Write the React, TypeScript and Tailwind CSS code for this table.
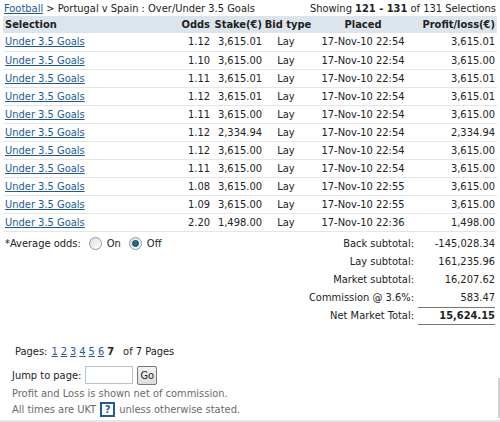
const rows = [
  ["1.12", "3,615.01", "17-Nov-10 22:54", "3,615.01"],
  ["1.10", "3,615.00", "17-Nov-10 22:54", "3,615.00"],
  ["1.11", "3,615.01", "17-Nov-10 22:54", "3,615.01"],
  ["1.12", "3,615.01", "17-Nov-10 22:54", "3,615.01"],
  ["1.11", "3,615.00", "17-Nov-10 22:54", "3,615.00"],
  ["1.12", "2,334.94", "17-Nov-10 22:54", "2,334.94"],
  ["1.12", "3,615.00", "17-Nov-10 22:54", "3,615.00"],
  ["1.11", "3,615.00", "17-Nov-10 22:54", "3,615.00"],
  ["1.08", "3,615.00", "17-Nov-10 22:55", "3,615.00"],
  ["1.09", "3,615.00", "17-Nov-10 22:55", "3,615.00"],
  ["2.20", "1,498.00", "17-Nov-10 22:36", "1,498.00"],
];

const subtotals = [
  ["Back subtotal:", "-145,028.34"],
  ["Lay subtotal:", "161,235.96"],
  ["Market subtotal:", "16,207.62"],
  ["Commission @ 3.6%:", "583.47"],
];

function Radio({ checked, label }: { checked?: boolean; label: string }) {
  return (
    <span className="flex items-center gap-[5px]">
      <span className="w-[13px] h-[13px] rounded-full border border-[#8a9aa6] bg-gradient-to-br from-[#d8dde2] to-[#ffffff] flex items-center justify-center">
        {checked && <span className="w-[7px] h-[7px] rounded-full bg-[#1f6f86] border border-[#0f4a5c]" />}
      </span>
      <span>{label}</span>
    </span>
  );
}

export default function App() {
  return (
    <div className="w-[500px] h-[422px] bg-white text-[#222] text-[11px] leading-[13px] relative" style={{ fontFamily: '"DejaVu Sans Condensed", "Liberation Sans", sans-serif' }}>
      <div className="flex justify-between px-[4px] pt-[2px] h-[16px]">
        <div>
          <a className="text-[#1d5a96] underline">Football</a> &gt; Portugal v Spain : Over/Under 3.5 Goals
        </div>
        <div>
          Showing <b>121 - 131</b> of 131 Selections
        </div>
      </div>

      <table className="table-fixed border-collapse ml-[3px] w-[494px]">
        <colgroup>
          <col className="w-[172px]" />
          <col className="w-[35px]" />
          <col className="w-[53px]" />
          <col className="w-[50px]" />
          <col className="w-[100px]" />
          <col className="w-[84px]" />
        </colgroup>
        <thead>
          <tr className="bg-[#dce5eb] h-[17px] font-bold">
            <th className="text-left pl-[2px]">Selection</th>
            <th className="text-right">Odds</th>
            <th className="text-right pr-[1px]">Stake(€)</th>
            <th className="text-center">Bid type</th>
            <th className="text-center">Placed</th>
            <th className="text-right pr-[2px]">Profit/loss(€)</th>
          </tr>
        </thead>
        <tbody>
          {rows.map((r, i) => (
            <tr key={i} className="h-[18px] border-b border-[#e3e6e8]">
              <td className="pl-[2px]">
                <a className="text-[#1d5a96] underline">Under 3.5 Goals</a>
              </td>
              <td className="text-right">{r[0]}</td>
              <td className="text-right pr-[1px]">{r[1]}</td>
              <td className="text-center pr-[4px]">Lay</td>
              <td className="text-center">{r[2]}</td>
              <td className="text-right pr-[2px]">{r[3]}</td>
            </tr>
          ))}
        </tbody>
      </table>

      <div className="flex mt-[3px]">
        <div className="flex items-start gap-[8px] pl-[5px] pt-[2px]">
          <span>*Average odds:</span>
          <Radio label="On" />
          <Radio checked label="Off" />
        </div>
        <div className="ml-auto w-[300px] pr-[5px]">
          {subtotals.map(([l, v]) => (
            <div key={l} className="flex justify-end h-[18px] items-center">
              <span className="text-right">{l}</span>
              <span className="w-[81px] text-right">{v}</span>
            </div>
          ))}
          <div className="flex justify-end h-[18px] items-center">
            <span className="text-right">Net Market Total:</span>
            <span className="w-[77px] ml-[4px] text-right font-bold border-t border-b border-[#777] h-[18px] leading-[16px]">15,624.15</span>
          </div>
        </div>
      </div>

      <div className="pl-[15px] mt-[20px] flex items-center">
        <span className="mr-[4px]">Pages:</span>
        {["1", "2", "3", "4", "5", "6"].map((p) => (
          <a key={p} className="text-[#1d5a96] underline mr-[3px]">{p}</a>
        ))}
        <b className="mr-[9px]">7</b>
        <span>of 7 Pages</span>
      </div>

      <div className="pl-[12px] mt-[8px] flex items-center gap-[4px]">
        <span>Jump to page:</span>
        <span className="w-[48px] h-[18px] border border-[#b9c3cb] bg-white inline-block" />
        <span className="h-[19px] px-[2px] border border-[#777] rounded-[2px] bg-gradient-to-b from-[#f4f4f4] to-[#dcdcdc] flex items-center">Go</span>
      </div>

      <div className="pl-[12px] text-[#6a6a6a] mt-[1px]">
        <div className="h-[16px] leading-[16px]">Profit and Loss is shown net of commission.</div>
        <div className="h-[16px] leading-[16px] flex items-center">
          All times are UKT
          <span className="mx-[4px] w-[15px] h-[15px] border-2 border-[#1d5a96] text-[#1d5a96] font-bold flex items-center justify-center">?</span>
          unless otherwise stated.
        </div>
      </div>

      <div className="absolute left-0 right-0 bottom-0 h-[2px] bg-[#e6e6e6]" />
      <div className="absolute right-0 bottom-[4px] h-[40px] w-[2px] bg-[#d0d0d0]" />
    </div>
  );
}
